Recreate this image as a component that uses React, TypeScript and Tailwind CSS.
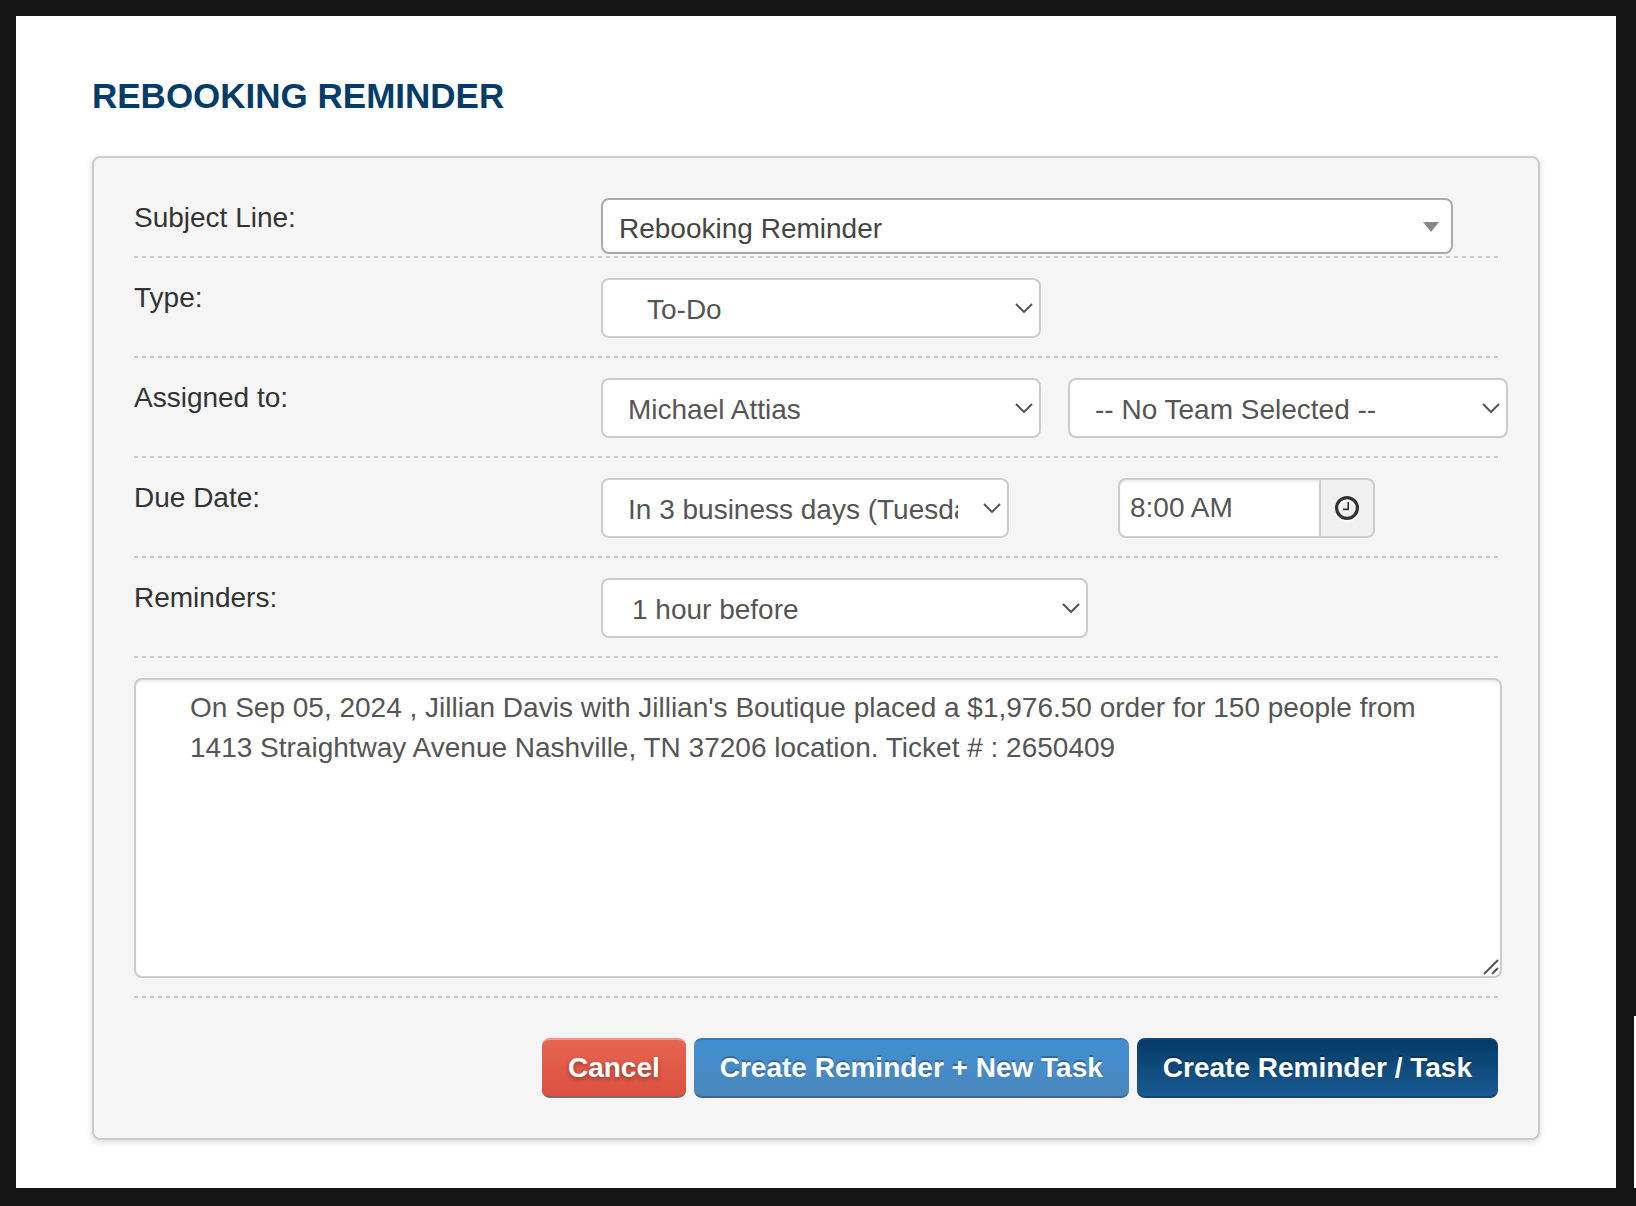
import clsx from 'clsx';
import React from 'react';

interface RowProps {
	label: string;
	htmlFor: string;
	className?: string;
	children: React.ReactNode;
}

interface SelectFieldProps {
	id: string;
	options: string[];
	className?: string;
	label?: string;
}

const Divider = () => (
	<div className="h-[2px] bg-[repeating-linear-gradient(90deg,#c8c8c8_0_4px,transparent_4px_8px)]" />
);

const Row = ({ label, htmlFor, className = 'pb-[18px]', children }: RowProps) => (
	<div>
		<div className={clsx('flex items-start', className)}>
			<label htmlFor={htmlFor} className="w-[467px] shrink-0 text-[#333333]">
				{label}
			</label>
			<div className="flex min-w-0 flex-1 items-start">{children}</div>
		</div>
		<Divider />
	</div>
);

const SelectField = ({ id, options, className, label }: SelectFieldProps) => (
	<div className="relative shrink-0">
		<select
			id={id}
			aria-label={label}
			className={clsx(
				'block h-[60px] appearance-none rounded-lg border-2 border-[#cccccc] bg-white pt-[3px] pr-[49px] text-[#555555]',
				className
			)}
		>
			{options.map((option) => (
				<option key={option}>{option}</option>
			))}
		</select>
		<svg
			viewBox="0 0 18 10"
			className="pointer-events-none absolute top-[25px] right-2 h-[10px] w-[18px]"
			fill="none"
			stroke="#555555"
			strokeWidth="2"
		>
			<path d="M1 1l8 8 8-8" />
		</svg>
	</div>
);

const ClockIcon = () => (
	<svg
		viewBox="0 0 24 24"
		className="h-6 w-6 drop-shadow-[0_2px_0_#ffffff]"
		fill="none"
		stroke="#333333"
	>
		<circle cx="12" cy="12" r="10.4" strokeWidth="3.2" />
		<path d="M13.2 6v7.4H8" strokeWidth="1.6" />
	</svg>
);

const App = () => {
	const buttonBase = 'h-[60px] rounded-lg border-y-2 px-[26px] font-bold text-white';

	return (
		<div className="relative min-h-screen bg-[#141414] pt-4 pr-5 pb-[18px] pl-4 font-['Liberation_Sans',Arial,sans-serif] text-[28px] leading-[40px]">
			<main className="bg-white px-[76px] pt-14 pb-12">
				<h1 className="mb-9 text-[35px] leading-[48px] font-bold text-[#033c68] uppercase">
					Rebooking Reminder
				</h1>
				<form
					onSubmit={(e) => e.preventDefault()}
					className="space-y-5 rounded-lg border-2 border-[#cccccc] bg-[#f5f5f5] p-10 shadow-[0_2px_6px_rgba(0,0,0,0.15)]"
				>
					<Row label="Subject Line:" htmlFor="subject" className="pb-[2px]">
						<div className="relative mr-[45px] flex-1">
							<select
								id="subject"
								className="block h-14 w-full appearance-none rounded-lg border-2 border-[#aaaaaa] bg-white pt-[5px] pr-12 pl-4 text-[#444444]"
							>
								<option>Rebooking Reminder</option>
							</select>
							<svg
								viewBox="0 0 16 10"
								className="pointer-events-none absolute top-6 right-[14px] h-[10px] w-4"
								fill="#888888"
							>
								<path d="M0 0h16L8 10z" />
							</svg>
						</div>
					</Row>
					<Row label="Type:" htmlFor="type">
						<SelectField id="type" options={['To-Do']} className="w-[440px] pl-11" />
					</Row>
					<Row label="Assigned to:" htmlFor="assignee">
						<div className="flex gap-[27px]">
							<SelectField
								id="assignee"
								options={['Michael Attias']}
								className="w-[440px] pl-[25px]"
							/>
							<SelectField
								id="team"
								label="Team"
								options={['-- No Team Selected --']}
								className="w-[440px] pl-[25px]"
							/>
						</div>
					</Row>
					<Row label="Due Date:" htmlFor="due">
						<SelectField
							id="due"
							options={['In 3 business days (Tuesday)']}
							className="w-[408px] pl-[25px]"
						/>
						<div className="ml-[109px] flex h-[60px]">
							<input
								type="text"
								aria-label="Due time"
								defaultValue="8:00 AM"
								className="w-[203px] rounded-l-lg border-2 border-[#cccccc] bg-white px-[10px] text-[#555555] shadow-[inset_0_2px_2px_rgba(0,0,0,0.075)]"
							/>
							<button
								type="button"
								aria-label="Pick a time"
								className="flex w-[54px] items-center justify-center rounded-r-lg border-2 border-l-0 border-[#cccccc] bg-[#f0f0f0]"
							>
								<ClockIcon />
							</button>
						</div>
					</Row>
					<Row label="Reminders:" htmlFor="reminders">
						<SelectField
							id="reminders"
							options={['1 hour before']}
							className="w-[487px] pl-[29px]"
						/>
					</Row>
					<div>
						<div className="relative -mr-1 mb-[18px]">
							<textarea
								aria-label="Notes"
								defaultValue="On Sep 05, 2024 , Jillian Davis with Jillian's Boutique placed a $1,976.50 order for 150 people from 1413 Straightway Avenue Nashville, TN 37206 location. Ticket # : 2650409"
								className="block h-[300px] w-full resize-none rounded-lg border-2 border-[#cccccc] bg-white py-2 pr-6 pl-[54px] text-[#555555] shadow-[inset_0_2px_2px_rgba(0,0,0,0.075)]"
							/>
							<svg
								viewBox="0 0 16 16"
								className="pointer-events-none absolute right-[3px] bottom-[3px] h-4 w-4"
								stroke="#555555"
								strokeWidth="2"
							>
								<path d="M1 15L15 1M9 15l6-6" />
							</svg>
						</div>
						<Divider />
					</div>
					<div className="flex justify-end gap-2 pt-5">
						<button
							type="button"
							className={clsx(
								buttonBase,
								'border-t-[#f0998d] border-b-[#7d6a6c] bg-[#dd5041] bg-linear-to-b from-[#e66450] to-[#dc5040] [text-shadow:0_2px_4px_rgba(0,0,0,0.35)]'
							)}
						>
							Cancel
						</button>
						<button
							type="submit"
							className={clsx(
								buttonBase,
								'border-t-[#3c78b0] border-b-[#3b6690] bg-linear-to-b from-[#408fd3] to-[#4a86bb] [text-shadow:0_-2px_0_rgba(0,0,0,0.25)]'
							)}
						>
							Create Reminder + New Task
						</button>
						<button
							type="submit"
							className={clsx(
								buttonBase,
								'border-t-[#0d4675] border-b-[#15466f] bg-linear-to-b from-[#053b66] to-[#1a5b92] [text-shadow:0_-2px_0_rgba(0,0,0,0.25)]'
							)}
						>
							Create Reminder / Task
						</button>
					</div>
				</form>
			</main>
			<div className="absolute right-0 bottom-[18px] h-[172px] w-[2px] bg-white" />
		</div>
	);
};

export default App;
